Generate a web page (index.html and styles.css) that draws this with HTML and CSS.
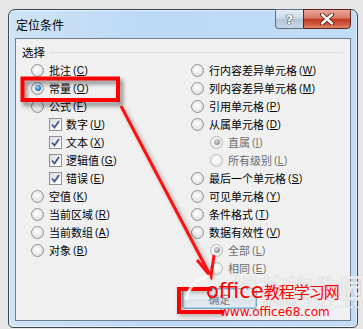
FILE: index.html
```html
<!DOCTYPE html>
<html lang="zh-CN">
<head>
<meta charset="utf-8">
<title>定位条件</title>
<link rel="stylesheet" href="styles.css">
</head>
<body>
<div class="window">
  <div class="titlebar">
    <span class="title">定位条件</span>
    <div class="ctrls">
      <div class="btn help">?</div>
      <div class="btn close">
        <svg width="16" height="12" viewBox="0 0 16 12"><path d="M3 1.5 L13 10.5 M13 1.5 L3 10.5" stroke="#5a1a12" stroke-width="4.2" stroke-linecap="round"/><path d="M3 1.5 L13 10.5 M13 1.5 L3 10.5" stroke="#fff" stroke-width="2.4" stroke-linecap="round"/></svg>
      </div>
    </div>
  </div>
  <div class="panel">
    <div class="group-head"><span class="glabel">选择</span><i class="rule"></i></div>
    <div class="cols">
      <div class="col">
        <div class="opt"><span class="radio"></span>批注 <span class="key">(<u>C</u>)</span></div>
        <div class="opt"><span class="radio on"></span>常量 <span class="key">(<u>O</u>)</span></div>
        <div class="opt"><span class="radio"></span>公式 <span class="key">(<u>F</u>)</span></div>
        <div class="opt sub"><span class="check"><svg width="9" height="9" viewBox="0 0 9 9"><path d="M1 4.5 L3.5 7.5 L8 1" fill="none" stroke="#3d5a96" stroke-width="1.8"/></svg></span>数字 <span class="key">(<u>U</u>)</span></div>
        <div class="opt sub"><span class="check"><svg width="9" height="9" viewBox="0 0 9 9"><path d="M1 4.5 L3.5 7.5 L8 1" fill="none" stroke="#3d5a96" stroke-width="1.8"/></svg></span>文本 <span class="key">(<u>X</u>)</span></div>
        <div class="opt sub"><span class="check"><svg width="9" height="9" viewBox="0 0 9 9"><path d="M1 4.5 L3.5 7.5 L8 1" fill="none" stroke="#3d5a96" stroke-width="1.8"/></svg></span>逻辑值 <span class="key">(<u>G</u>)</span></div>
        <div class="opt sub"><span class="check"><svg width="9" height="9" viewBox="0 0 9 9"><path d="M1 4.5 L3.5 7.5 L8 1" fill="none" stroke="#3d5a96" stroke-width="1.8"/></svg></span>错误 <span class="key">(<u>E</u>)</span></div>
        <div class="opt"><span class="radio"></span>空值 <span class="key">(<u>K</u>)</span></div>
        <div class="opt"><span class="radio"></span>当前区域 <span class="key">(<u>R</u>)</span></div>
        <div class="opt"><span class="radio"></span>当前数组 <span class="key">(<u>A</u>)</span></div>
        <div class="opt"><span class="radio"></span>对象 <span class="key">(<u>B</u>)</span></div>
      </div>
      <div class="col">
        <div class="opt"><span class="radio"></span>行内容差异单元格 <span class="key">(<u>W</u>)</span></div>
        <div class="opt"><span class="radio"></span>列内容差异单元格 <span class="key">(<u>M</u>)</span></div>
        <div class="opt"><span class="radio"></span>引用单元格 <span class="key">(<u>P</u>)</span></div>
        <div class="opt"><span class="radio"></span>从属单元格 <span class="key">(<u>D</u>)</span></div>
        <div class="opt sub2 dis"><span class="radio on"></span>直属 <span class="key">(<u>I</u>)</span></div>
        <div class="opt sub2 dis"><span class="radio"></span>所有级别 <span class="key">(<u>L</u>)</span></div>
        <div class="opt"><span class="radio"></span>最后一个单元格 <span class="key">(<u>S</u>)</span></div>
        <div class="opt"><span class="radio"></span>可见单元格 <span class="key">(<u>Y</u>)</span></div>
        <div class="opt"><span class="radio"></span>条件格式 <span class="key">(<u>T</u>)</span></div>
        <div class="opt"><span class="radio"></span>数据有效性 <span class="key">(<u>V</u>)</span></div>
        <div class="opt sub2 dis"><span class="radio on"></span>全部 <span class="key">(<u>L</u>)</span></div>
        <div class="opt sub2 dis"><span class="radio"></span>相同 <span class="key">(<u>E</u>)</span></div>
      </div>
    </div>
    <div class="buttons">
      <div class="pbtn">确定</div>
    </div>
  </div>
</div>

<svg class="overlay" width="363" height="329" viewBox="0 0 363 329">
  <defs>
    <filter id="sh" x="-20%" y="-20%" width="140%" height="160%"><feGaussianBlur stdDeviation="2"/></filter>
  </defs>
  <rect x="25" y="82" width="96" height="22" fill="none" stroke="#000" stroke-opacity="0.45" stroke-width="4" filter="url(#sh)"/>
  <rect x="22.5" y="78.5" width="95.5" height="21.5" fill="none" stroke="#ff0000" stroke-width="4"/>
  <line x1="124" y1="109" x2="213" y2="278" stroke="#000" stroke-opacity="0.3" stroke-width="3" filter="url(#sh)"/>
  <line x1="121" y1="106" x2="210" y2="275" stroke="#ff1010" stroke-width="3"/>
  <path d="M197 260 L211 277 L214 255" fill="none" stroke="#ff1010" stroke-width="3" stroke-linejoin="miter"/>
  <path d="M212 289 L179 289 L179 312 L224 312" fill="none" stroke="#000" stroke-opacity="0.3" stroke-width="4" filter="url(#sh)" transform="translate(2 2)"/>
  <path d="M212 289 L179 289 L179 312 L224 312" fill="none" stroke="#ff0000" stroke-width="4"/>
  <path d="M186 300 Q190 280 210 276" fill="none" stroke="#fff" stroke-opacity="0.8" stroke-width="3"/>
</svg>
<div class="wm-ghost">绿茶软件园</div>
<div class="wm-url-ghost">www.33LC.com</div>
<div class="wm-title"><span class="lat">office</span><span class="cjk">教程学习网</span></div>
<div class="wm-url">www.office68.com</div>
</body>
</html>
```
FILE: styles.css
```css
* { box-sizing: border-box; margin: 0; padding: 0; }
html, body { width: 363px; height: 329px; overflow: hidden; }
body {
  background: #e6e6e6;
  padding: 9px 0 0 8px;
  position: relative;
  font-family: "Noto Sans CJK SC", "Noto Sans", sans-serif;
  color: #000;
}
.window {
  width: 350px;
  height: 319px;
  border: 1px solid #3c4550;
  border-radius: 7px 7px 5px 5px;
  background: linear-gradient(90deg, #cfe3f6 0%, #bcd9f5 40%, #c2dcf5 100%);
  box-shadow: inset 0 0 0 1px rgba(255,255,255,0.55);
  padding: 0 6px 6px;
  display: flex;
  flex-direction: column;
}
.titlebar {
  height: 28px;
  display: flex;
  align-items: flex-start;
}
.title {
  font-size: 12px;
  line-height: 12px;
  padding: 9px 0 0 1px;
  color: #000;
}
.ctrls {
  margin-left: auto;
  margin-top: -1px;
  display: flex;
}
.btn {
  height: 20px;
  display: flex;
  align-items: center;
  justify-content: center;
}
.help {
  width: 28px;
  border: 1px solid #5f6d7d;
  border-right: none;
  border-radius: 0 0 0 4px;
  background: linear-gradient(#e4edf6 0%, #c9d7e6 50%, #b2c4d7 51%, #c5d6e6 100%);
  font-family: "DejaVu Sans", sans-serif;
  font-weight: bold;
  font-size: 13px;
  color: #fff;
  text-shadow: 0 0 1px #33414f, 0 0 1px #33414f, 0 0 1px #33414f;
}
.close {
  width: 48px;
  border: 1px solid #5c241c;
  border-radius: 0 0 4px 0;
  background: linear-gradient(#e9a898 0%, #d77a66 45%, #c13b23 52%, #d0593f 80%, #e08a6f 100%);
}
.panel {
  flex: 1;
  background: #f0f0f0;
  border: 1px solid #6f7d8c;
  display: flex;
  flex-direction: column;
  position: relative;
}
.group-head {
  display: flex;
  align-items: center;
  padding: 7px 7px 0 6px;
  height: 19px;
}
.glabel {
  font-size: 11.5px;
  line-height: 12px;
}
.rule {
  flex: 1;
  height: 1px;
  background: #d6dde3;
  margin-left: 5px;
}
.cols {
  display: grid;
  grid-template-columns: 160px 1fr;
  padding: 3px 0 0 15px;
}
.col { display: flex; flex-direction: column; }
.opt {
  height: 18px;
  display: flex;
  align-items: center;
  font-size: 11px;
  white-space: nowrap;
}
.opt.sub { padding-left: 18px; }
.opt.sub2 { padding-left: 19px; }
.opt.dis { color: #6d6d6d; }
.key {
  font-family: "Liberation Sans", sans-serif;
  font-size: 10px;
  margin-left: 2px;
  letter-spacing: 0.5px;
}
.radio {
  width: 13px;
  height: 13px;
  flex: none;
  border-radius: 50%;
  border: 1px solid #8e9297;
  background: radial-gradient(circle at 45% 40%, #ffffff 0%, #ececec 45%, #d2d4d7 100%);
  margin-right: 5px;
  display: grid;
  place-items: center;
}
.radio.on::after {
  content: "";
  width: 6px;
  height: 6px;
  border-radius: 50%;
  background: radial-gradient(circle at 40% 35%, #b8e4ff 0%, #2f86cf 50%, #0e3f72 100%);
}
.dis .radio {
  border-color: #b5b8bb;
  background: radial-gradient(circle at 45% 40%, #ffffff 0%, #f1f1f1 50%, #e2e3e4 100%);
}
.dis .radio.on::after {
  background: radial-gradient(circle at 40% 35%, #e0e0e0 0%, #9b9b9b 60%, #7a7a7a 100%);
}
.check {
  width: 13px;
  height: 13px;
  flex: none;
  border: 1px solid #8e9297;
  background: linear-gradient(135deg, #d9dbde 0%, #f4f4f4 60%, #ffffff 100%);
  margin-right: 4px;
  display: grid;
  place-items: center;
}
.buttons {
  display: flex;
  padding: 11px 0 0 166px;
}
.pbtn {
  width: 75px;
  height: 21px;
  border: 1px solid #7fa7c6;
  border-radius: 3px;
  background: linear-gradient(#f4f8fb 0%, #e8eef3 50%, #dae3ea 51%, #e4ebf1 100%);
  box-shadow: inset 0 0 0 1px #9fd3ef;
  font-size: 11px;
  color: #7a7a7a;
  display: flex;
  align-items: center;
  justify-content: center;
}
.overlay {
  position: absolute;
  left: 0;
  top: 0;
  pointer-events: none;
}
.wm-ghost {
  position: absolute;
  left: 232px;
  top: 272px;
  font-size: 26px;
  line-height: 30px;
  font-weight: bold;
  color: rgba(255,255,255,0.75);
  text-shadow: 0 0 1px rgba(120,120,120,0.5);
  letter-spacing: 1px;
  white-space: nowrap;
}
.wm-url-ghost {
  position: absolute;
  left: 262px;
  top: 295px;
  font-family: "DejaVu Sans", sans-serif;
  font-size: 15px;
  line-height: 16px;
  color: rgba(255,255,255,0.8);
  text-shadow: 0 0 1px rgba(120,120,120,0.5);
  white-space: nowrap;
}
.wm-title {
  position: absolute;
  left: 206px;
  top: 280px;
  height: 22px;
  display: flex;
  align-items: baseline;
  color: #ff0000;
  white-space: nowrap;
}
.wm-title .lat {
  font-family: "DejaVu Sans", sans-serif;
  font-size: 21px;
  line-height: 22px;
}
.wm-title .cjk {
  font-size: 16px;
  line-height: 22px;
  letter-spacing: -1px;
}
.wm-url {
  position: absolute;
  left: 220px;
  top: 304px;
  font-family: "DejaVu Sans", sans-serif;
  font-size: 12px;
  line-height: 16px;
  color: #ff0000;
  white-space: nowrap;
}
```
